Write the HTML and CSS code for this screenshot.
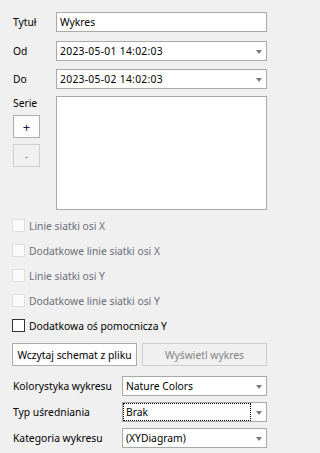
FILE: index.html
```html
<!DOCTYPE html>
<html lang="pl">
<head>
<meta charset="utf-8">
<link rel="stylesheet" href="styles.css">
</head>
<body>
<div class="form">
  <div class="row row-title">
    <span class="lbl">Tytuł</span>
    <div class="field">Wykres</div>
  </div>
  <div class="row row-od">
    <span class="lbl">Od</span>
    <div class="field combo"><span class="val date">2023-05-01 14:02:03</span><span class="arrow"></span></div>
  </div>
  <div class="row row-do">
    <span class="lbl">Do</span>
    <div class="field combo"><span class="val date">2023-05-02 14:02:03</span><span class="arrow"></span></div>
  </div>
  <div class="series">
    <div class="series-side">
      <span class="lbl lbl-serie">Serie</span>
      <div class="sbtn sbtn-plus">+</div>
      <div class="sbtn sbtn-minus disabled">-</div>
    </div>
    <div class="list"></div>
  </div>
  <div class="checks">
    <div class="chk disabled"><span class="box"></span><span class="ctext">Linie siatki osi X</span></div>
    <div class="chk disabled"><span class="box"></span><span class="ctext">Dodatkowe linie siatki osi X</span></div>
    <div class="chk disabled"><span class="box"></span><span class="ctext">Linie siatki osi Y</span></div>
    <div class="chk disabled"><span class="box"></span><span class="ctext">Dodatkowe linie siatki osi Y</span></div>
    <div class="chk"><span class="box"></span><span class="ctext">Dodatkowa oś pomocnicza Y</span></div>
  </div>
  <div class="actions">
    <div class="btn">Wczytaj schemat z pliku</div>
    <div class="btn disabled">Wyświetl wykres</div>
  </div>
  <div class="row row-wide row-k">
    <span class="lbl">Kolorystyka wykresu</span>
    <div class="field combo"><span class="val">Nature Colors</span><span class="arrow"></span></div>
  </div>
  <div class="row row-wide row-t">
    <span class="lbl">Typ uśredniania</span>
    <div class="field combo focused"><span class="val"><span class="focus">Brak</span></span><span class="arrow"></span></div>
  </div>
  <div class="row row-wide row-c">
    <span class="lbl">Kategoria wykresu</span>
    <div class="field combo"><span class="val">(XYDiagram)</span><span class="arrow"></span></div>
  </div>
</div>
</body>
</html>
```

FILE: styles.css
```css
* { box-sizing: border-box; }
html, body {
  margin: 0;
  padding: 0;
  background: #f0f0f0;
}
body {
  width: 275px;
  height: 453px;
  overflow: hidden;
  font-family: "Noto Sans", "Open Sans", sans-serif;
  font-size: 10.3px;
  color: #000;
}
.form {
  display: flex;
  flex-direction: column;
  padding: 12px 8px 0 12px;
}
.row {
  display: flex;
  align-items: center;
  height: 20px;
}
.lbl {
  width: 44px;
  flex: none;
  padding-left: 1px;
  line-height: 14px;
}
.row-wide .lbl { width: 110px; }
.row-od { margin-top: 9px; }
.row-do { margin-top: 8px; }
.field {
  flex: 1;
  height: 20px;
  background: #fff;
  border: 1px solid #a9a9a9;
  padding: 0 3px;
  display: flex;
  align-items: center;
  line-height: 14px;
}
.combo .val { flex: 1; white-space: nowrap; }
.combo .date { letter-spacing: 0.3px; }
.arrow {
  width: 0;
  height: 0;
  border-left: 3.5px solid transparent;
  border-right: 3.5px solid transparent;
  border-top: 4px solid #7a7a7a;
  margin-right: 1px;
  margin-top: 1px;
}
.focus {
  display: block;
  outline: 1px dotted #000;
  outline-offset: 0;
  margin-left: -2px;
  margin-right: 6px;
  padding-left: 2px;
  height: 16px;
  line-height: 16px;
}
.series {
  display: flex;
  margin-top: 7px;
}
.series-side {
  width: 44px;
  flex: none;
  display: flex;
  flex-direction: column;
  align-items: flex-start;
}
.sbtn {
  width: 27px;
  height: 23px;
  border: 1px solid #adadad;
  background: #fdfdfd;
  display: flex;
  align-items: center;
  justify-content: center;
  margin-left: 1px;
  font-size: 13px;
  color: #1a1a4a;
}
.sbtn-plus { margin-top: 5px; }
.sbtn-minus { margin-top: 6px; }
.sbtn.disabled {
  background: #f0f0f0;
  border-color: #cfcfcf;
  color: #8a8a8a;
  font-size: 11px;
}
.list {
  flex: 1;
  height: 114px;
  background: #fff;
  border: 1px solid #a9a9a9;
}
.checks {
  display: flex;
  flex-direction: column;
  margin-top: 3px;
}
.chk {
  display: flex;
  align-items: center;
  height: 25px;
}
.box {
  width: 13px;
  height: 13px;
  border: 1px solid #333;
  background: #fff;
  flex: none;
}
.ctext { margin-left: 4px; line-height: 14px; }
.chk.disabled .box { border-color: #dedede; background: #fbfbfb; }
.chk.disabled .ctext { color: #6d6d78; }
.actions {
  display: flex;
  justify-content: space-between;
  margin-top: 5px;
}
.btn {
  height: 23px;
  width: 125px;
  border: 1px solid #adadad;
  background: #fdfdfd;
  display: flex;
  align-items: center;
  justify-content: center;
  white-space: nowrap;
}
.btn.disabled {
  background: #f0f0f0;
  border-color: #cdcdcd;
  color: #838383;
}
.row-k { margin-top: 10px; }
.row-t { margin-top: 6px; }
.row-c { margin-top: 6px; }
```
